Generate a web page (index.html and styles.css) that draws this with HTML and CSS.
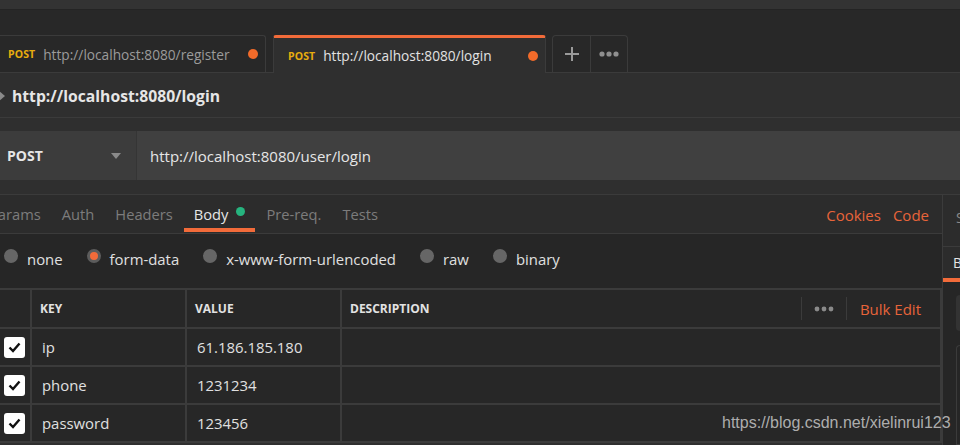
FILE: index.html
```html
<!DOCTYPE html>
<html lang="en">
<head>
<meta charset="utf-8">
<title>Postman - login</title>
<link rel="stylesheet" href="styles.css">
</head>
<body>
<div class="app">
  <div class="topband"></div>
  <div class="tabstrip">
    <div class="rtab rtab-inactive">
      <span class="method">POST</span>
      <span class="rtab-url">http://localhost:8080/register</span>
      <span class="unsaved"></span>
    </div>
    <div class="rtab rtab-active">
      <span class="method">POST</span>
      <span class="rtab-url">http://localhost:8080/login</span>
      <span class="unsaved"></span>
    </div>
    <div class="tabtools">
      <div class="tool">
        <svg width="14" height="14" viewBox="0 0 14 14"><path d="M7 0v14M0 7h14" stroke="#9a9a9a" stroke-width="2"/></svg>
      </div>
      <div class="tool">
        <svg width="20" height="6" viewBox="0 0 20 6"><circle cx="3" cy="3" r="2.6" fill="#8f8f8f"/><circle cx="10" cy="3" r="2.6" fill="#8f8f8f"/><circle cx="17" cy="3" r="2.6" fill="#8f8f8f"/></svg>
      </div>
    </div>
  </div>

  <div class="titlerow">
    <svg class="caret-right" width="6" height="10" viewBox="0 0 6 10"><path d="M0 0L6 5L0 10Z" fill="#8a8a8a"/></svg>
    <span class="title">http://localhost:8080/login</span>
  </div>

  <div class="urlsection">
    <div class="urlbar">
      <div class="methodsel">
        <span class="methodsel-text">POST</span>
        <svg width="10" height="6" viewBox="0 0 10 6"><path d="M0 0H10L5 6Z" fill="#8a8a8a"/></svg>
      </div>
      <div class="urlinput">http://localhost:8080/user/login</div>
    </div>
  </div>

  <div class="main">
    <div class="builder">
      <div class="ptabs">
        <div class="ptab ptab-first">Params</div>
        <div class="ptab">Auth</div>
        <div class="ptab">Headers</div>
        <div class="ptab ptab-active">Body <span class="greendot"></span></div>
        <div class="ptab">Pre-req.</div>
        <div class="ptab">Tests</div>
        <div class="ptab-spacer"></div>
        <div class="ptab-link">Cookies</div>
        <div class="ptab-link">Code</div>
      </div>

      <div class="radios">
        <div class="radio"><span class="dot"></span><span>none</span></div>
        <div class="radio"><span class="dot dot-on"></span><span>form-data</span></div>
        <div class="radio"><span class="dot"></span><span>x-www-form-urlencoded</span></div>
        <div class="radio"><span class="dot"></span><span>raw</span></div>
        <div class="radio"><span class="dot"></span><span>binary</span></div>
      </div>

      <div class="kvtable">
        <div class="cell hcell"></div>
        <div class="cell hcell">KEY</div>
        <div class="cell hcell">VALUE</div>
        <div class="cell hcell hdesc">
          <span>DESCRIPTION</span>
          <span class="hspacer"></span>
          <span class="hmore">
            <svg width="20" height="6" viewBox="0 0 20 6"><circle cx="3" cy="3" r="2.4" fill="#8a8a8a"/><circle cx="10" cy="3" r="2.4" fill="#8a8a8a"/><circle cx="17" cy="3" r="2.4" fill="#8a8a8a"/></svg>
          </span>
          <span class="bulk">Bulk Edit</span>
        </div>

        <div class="cell ccell"><span class="check"><svg width="13" height="11" viewBox="0 0 13 11"><path d="M1.5 5.5L5 9L11.5 1.5" fill="none" stroke="#111" stroke-width="2.4"/></svg></span></div>
        <div class="cell dcell">ip</div>
        <div class="cell dcell">61.186.185.180</div>
        <div class="cell dcell"></div>

        <div class="cell ccell"><span class="check"><svg width="13" height="11" viewBox="0 0 13 11"><path d="M1.5 5.5L5 9L11.5 1.5" fill="none" stroke="#111" stroke-width="2.4"/></svg></span></div>
        <div class="cell dcell">phone</div>
        <div class="cell dcell">1231234</div>
        <div class="cell dcell"></div>

        <div class="cell ccell"><span class="check"><svg width="13" height="11" viewBox="0 0 13 11"><path d="M1.5 5.5L5 9L11.5 1.5" fill="none" stroke="#111" stroke-width="2.4"/></svg></span></div>
        <div class="cell dcell">password</div>
        <div class="cell dcell">123456</div>
        <div class="cell dcell"></div>
      </div>
    </div>

    <div class="sidepanel">
      <div class="side-top"><span class="side-label">Save</span></div>
      <div class="side-tab"><span class="side-tab-label">Body</span></div>
      <div class="side-body">
        <div class="side-box"></div>
        <div class="side-box2"></div>
      </div>
    </div>
  </div>

  <div class="watermark">https://blog.csdn.net/xielinrui123</div>
</div>
</body>
</html>
```

FILE: styles.css
```css
* { box-sizing: border-box; }
html, body { margin: 0; padding: 0; }
body {
  width: 960px;
  height: 445px;
  overflow: hidden;
  background: #2f2f2f;
  font-family: "Open Sans", "Noto Sans", sans-serif;
  color: #e0e0e0;
}
.app { position: relative; width: 960px; height: 445px; overflow: hidden; }

.topband { height: 10px; background: #333333; border-bottom: 1px solid #242424; }

.tabstrip {
  height: 63px;
  background: #282828;
  border-bottom: 1px solid #3b3b3b;
  display: flex;
  align-items: flex-end;
}
.rtab {
  display: flex;
  align-items: center;
  height: 37px;
  border: 1px solid #3b3b3b;
  border-bottom: none;
  border-radius: 3px 3px 0 0;
}
.rtab-inactive {
  width: 266px;
  border-left: none;
  border-radius: 0 3px 0 0;
  padding: 0 7px 0 8px;
  background: #282828;
}
.rtab-active {
  width: 273px;
  height: 38px;
  margin-left: 7px;
  margin-bottom: -1px;
  padding: 0 7px 0 14px;
  border-top: 3px solid #f26b3a;
  background: #2f2f2f;
  position: relative;
}
.method {
  font-size: 10.5px;
  font-weight: 700;
  color: #e8ad0e;
  margin-right: 8px;
  letter-spacing: 0.1px;
}
.rtab-url { font-size: 13.7px; color: #9b9b9b; flex: 1; white-space: nowrap; }
.rtab-active .rtab-url { color: #e2e2e2; }
.unsaved { width: 10px; height: 10px; border-radius: 50%; background: #f26b2a; }

.tabtools {
  display: flex;
  margin-left: 6px;
  height: 37px;
  border: 1px solid #3b3b3b;
  border-bottom: none;
  border-radius: 4px 4px 0 0;
}
.tool {
  width: 37px;
  display: flex;
  align-items: center;
  justify-content: center;
}
.tool + .tool { border-left: 1px solid #3b3b3b; }

.titlerow {
  height: 45px;
  display: flex;
  align-items: center;
  border-bottom: 1px solid #3b3b3b;
  padding-top: 2px;
}
.caret-right { margin-left: -1px; margin-right: 7px; }
.title { font-size: 15.7px; font-weight: 700; color: #e6e6e6; }

.urlsection { padding: 13px 0 14px; }
.urlbar { display: flex; height: 49px; }
.methodsel {
  width: 137px;
  background: #3c3c3c;
  display: flex;
  align-items: center;
  padding: 0 15px 0 7px;
  border-right: 1px solid #353535;
}
.methodsel-text { flex: 1; font-size: 14px; font-weight: 700; color: #e6e6e6; }
.urlinput {
  flex: 1;
  background: #404040;
  display: flex;
  align-items: center;
  padding-left: 13px;
  font-size: 15px;
  color: #e6e6e6;
}

.main { display: flex; border-top: 1px solid #3b3b3b; height: 251px; }
.builder { width: 942px; display: flex; flex-direction: column; }

.ptabs {
  height: 39px;
  display: flex;
  gap: 1px;
  background: #2c2c2c;
  border-bottom: 1px solid #3b3b3b;
}
.ptab {
  display: flex;
  align-items: center;
  padding: 4px 10px 0;
  border-bottom: 4px solid transparent;
  margin-bottom: 1px;
  font-size: 14.7px;
  color: #7c7c7c;
  white-space: nowrap;
}
.ptab-first { margin-left: -21px; }
.ptab-active { color: #e6e6e6; border-bottom-color: #f26b3a; }
.greendot { width: 9px; height: 9px; border-radius: 50%; background: #26b47f; margin-left: 8px; margin-top: -4px; }
.ptab-spacer { flex: 1; }
.ptab-link { display: flex; align-items: center; font-size: 15px; color: #e8643a; padding-top: 1px; }
.ptab-link + .ptab-link { margin-left: 11px; margin-right: 13px; }

.radios {
  height: 54px;
  background: #262626;
  display: flex;
  align-items: flex-start;
  padding: 15px 0 0 4px;
  gap: 24px;
}
.radio { display: flex; align-items: flex-start; gap: 9px; font-size: 14.9px; line-height: 20px; color: #e0e0e0; }
.dot { width: 14px; height: 14px; border-radius: 50%; background: #666666; margin-top: 0; }
.dot-on { background: #f26b3a; border: 3px solid #5c5c5c; }

.kvtable {
  display: grid;
  grid-template-columns: 32px 155px 155px 1fr;
  grid-template-rows: 39px 38px 38px 38px;
  border-top: 2px solid #3b3b3b;
  background: #272727;
}
.cell {
  border-right: 2px solid #3b3b3b;
  border-bottom: 2px solid #3b3b3b;
  display: flex;
  align-items: center;
}
.hcell { font-size: 12px; font-weight: 700; color: #e2e2e2; padding-left: 8px; }
.hdesc { padding-right: 19px; }
.hspacer { flex: 1; }
.hmore {
  display: flex;
  align-items: center;
  height: 23px;
  padding: 0 12px 0 12px;
  border-left: 1px solid #3b3b3b;
  border-right: 1px solid #3b3b3b;
}
.bulk { font-size: 15px; font-weight: 400; color: #e8643a; margin-left: 13px; }
.ccell { padding-left: 4px; }
.check {
  width: 21px;
  height: 21px;
  border-radius: 3px;
  background: #ffffff;
  display: flex;
  align-items: center;
  justify-content: center;
}
.dcell { padding-left: 10px; font-size: 14.9px; color: #e0e0e0; }

.sidepanel {
  width: 18px;
  border-left: 1px solid #3b3b3b;
  background: #2c2c2c;
  display: flex;
  flex-direction: column;
  overflow: hidden;
}
.side-top { height: 61px; border-bottom: 1px solid #3b3b3b; display: flex; align-items: center; padding-left: 13px; }
.side-label { font-size: 14px; color: #8a8a8a; white-space: nowrap; margin-top: -6px; }
.side-tab { height: 40px; border-bottom: 4px solid #f26b3a; display: flex; align-items: center; padding-left: 10px; }
.side-tab-label { font-size: 14px; color: #e6e6e6; white-space: nowrap; }
.side-body { flex: 1; background: #262626; padding: 13px 0 0 13px; }
.side-box { height: 36px; background: #333333; border-radius: 4px 0 0 4px; }
.side-box2 { height: 100px; margin-top: 14px; border: 1px solid #3b3b3b; border-right: none; border-radius: 4px 0 0 0; }

.watermark {
  position: absolute;
  left: 722px;
  top: 414px;
  font-family: "Liberation Sans", Arial, sans-serif;
  font-size: 16px;
  color: rgba(210, 210, 210, 0.8);
  white-space: nowrap;
}
```
